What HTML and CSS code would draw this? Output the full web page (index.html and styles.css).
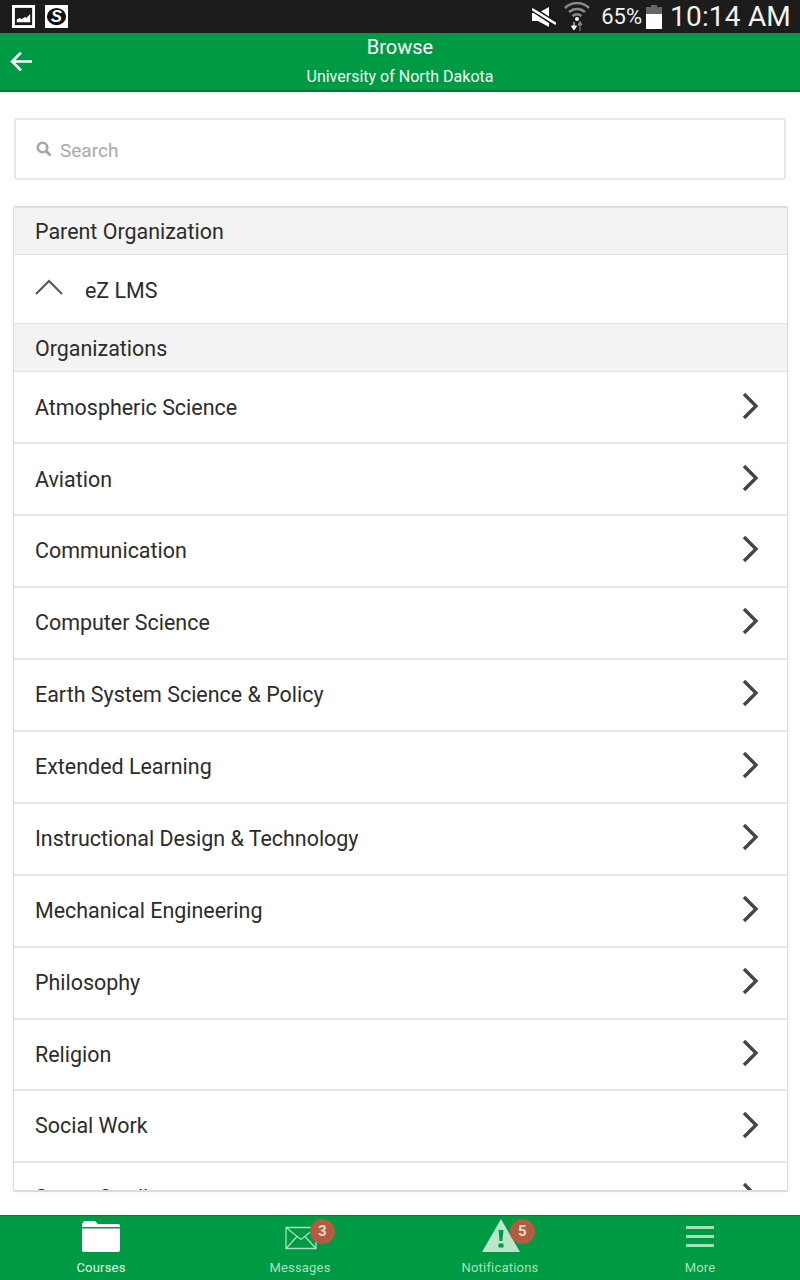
FILE: index.html
```html
<!DOCTYPE html>
<html lang="en">
<head>
<meta charset="utf-8">
<title>Browse</title>
<link rel="stylesheet" href="styles.css">
</head>
<body>
<div class="app">
  <div class="status">
    <div class="status-left">
      <svg class="sb-box" viewBox="0 0 24 24"><rect x="1.5" y="1.5" width="21" height="21" fill="#1c1c1c" stroke="#fff" stroke-width="3"/><path d="M5 18v-3l3-1.500 2 1 3.500-2 1.500 1 4-4v8.500z" fill="#fff"/></svg>
      <svg class="sb-box" viewBox="0 0 24 24"><rect width="24" height="24" fill="#fff"/><ellipse cx="12" cy="12" rx="10" ry="9" fill="#111"/><text x="12" y="17.500" text-anchor="middle" class="sb-s">S</text></svg>
    </div>
    <div class="status-right">
      <svg class="sb-mute" viewBox="0 0 24 20"><path d="M0 6h6l11-6v20L6 14H0z" fill="#fff"/><path d="M-1 1l26 17" stroke="#1c1c1c" stroke-width="5.500"/><path d="M0 2l24 15" stroke="#fff" stroke-width="2.400"/></svg>
      <svg class="sb-wifi" viewBox="0 0 26 30"><path d="M1 6a17 17 0 0 1 24 0M5 10a12 12 0 0 1 16 0M8.500 14a7 7 0 0 1 9 0" fill="none" stroke="#8a8a8a" stroke-width="2.500"/><circle cx="13" cy="17" r="2" fill="#fff"/><path d="M10 20v6M7.500 24l2.500 4 2.500-4z" fill="#fff" stroke="#fff" stroke-width="1"/><path d="M16 29v-7M14 23l2-3.500 2 3.500z" fill="#8a8a8a" stroke="#8a8a8a"/></svg>
      <span class="sb-pct">65%</span>
      <svg class="sb-batt" viewBox="0 0 16 24"><path d="M5 0h6v2H5z" fill="#666"/><path d="M0 2h16v7H0z" fill="#666"/><path d="M0 9h16v15H0z" fill="#fff"/></svg>
      <span class="sb-time">10:14 AM</span>
    </div>
  </div>
  <header class="topbar">
    <svg class="back" viewBox="0 0 24 24"><path d="M22 12H3M11.500 3.500L3 12l8.500 8.500" fill="none" stroke="#fff" stroke-width="2.600"/></svg>
    <div class="title">Browse</div>
    <div class="subtitle">University of North Dakota</div>
  </header>
  <main class="content">
    <div class="search">
      <svg class="search-icon" viewBox="0 0 16 16"><circle cx="6.500" cy="6.500" r="4.800" fill="none" stroke="#a8a8a8" stroke-width="2.600"/><path d="M10 10l4.500 4.500" stroke="#a8a8a8" stroke-width="3"/></svg>
      <span>Search</span>
    </div>
    <section class="card">
      <div class="section-head first">Parent Organization</div>
      <div class="parent-row">
        <svg class="up" viewBox="0 0 28 16"><path d="M1 15L14 2l13 13" fill="none" stroke="#555" stroke-width="2"/></svg>
        <span>eZ LMS</span>
      </div>
      <div class="section-head second">Organizations</div>
      <ul class="list">
        <li class="item"><span>Atmospheric Science</span><svg class="chev" viewBox="0 0 18 28"><path d="M2 2l12 12L2 26" fill="none" stroke="#444" stroke-width="3.400"/></svg></li>
        <li class="item"><span>Aviation</span><svg class="chev" viewBox="0 0 18 28"><path d="M2 2l12 12L2 26" fill="none" stroke="#444" stroke-width="3.400"/></svg></li>
        <li class="item"><span>Communication</span><svg class="chev" viewBox="0 0 18 28"><path d="M2 2l12 12L2 26" fill="none" stroke="#444" stroke-width="3.400"/></svg></li>
        <li class="item"><span>Computer Science</span><svg class="chev" viewBox="0 0 18 28"><path d="M2 2l12 12L2 26" fill="none" stroke="#444" stroke-width="3.400"/></svg></li>
        <li class="item"><span>Earth System Science &amp; Policy</span><svg class="chev" viewBox="0 0 18 28"><path d="M2 2l12 12L2 26" fill="none" stroke="#444" stroke-width="3.400"/></svg></li>
        <li class="item"><span>Extended Learning</span><svg class="chev" viewBox="0 0 18 28"><path d="M2 2l12 12L2 26" fill="none" stroke="#444" stroke-width="3.400"/></svg></li>
        <li class="item"><span>Instructional Design &amp; Technology</span><svg class="chev" viewBox="0 0 18 28"><path d="M2 2l12 12L2 26" fill="none" stroke="#444" stroke-width="3.400"/></svg></li>
        <li class="item"><span>Mechanical Engineering</span><svg class="chev" viewBox="0 0 18 28"><path d="M2 2l12 12L2 26" fill="none" stroke="#444" stroke-width="3.400"/></svg></li>
        <li class="item"><span>Philosophy</span><svg class="chev" viewBox="0 0 18 28"><path d="M2 2l12 12L2 26" fill="none" stroke="#444" stroke-width="3.400"/></svg></li>
        <li class="item"><span>Religion</span><svg class="chev" viewBox="0 0 18 28"><path d="M2 2l12 12L2 26" fill="none" stroke="#444" stroke-width="3.400"/></svg></li>
        <li class="item"><span>Social Work</span><svg class="chev" viewBox="0 0 18 28"><path d="M2 2l12 12L2 26" fill="none" stroke="#444" stroke-width="3.400"/></svg></li>
        <li class="item"><span>Space Studies</span><svg class="chev" viewBox="0 0 18 28"><path d="M2 2l12 12L2 26" fill="none" stroke="#444" stroke-width="3.400"/></svg></li>
      </ul>
    </section>
  </main>
  <nav class="tabs">
    <div class="tab active">
      <div class="tab-icon"><svg class="ic-folder" viewBox="0 0 38 33"><path d="M1 4a2 2 0 0 1 2-2h10l3 3h20a2 2 0 0 1 2 2v1H0V4z" fill="#fff"/><path d="M0 9.500h38V31a2 2 0 0 1-2 2H2a2 2 0 0 1-2-2z" fill="#fff"/></svg></div>
      <span>Courses</span>
    </div>
    <div class="tab">
      <div class="tab-icon"><svg class="ic-mail" viewBox="0 0 32 26"><path d="M1 3.500h30v21H1zM1 3.500l15 12 15-12M1 24.500l11-12M31 24.500l-11-12" fill="none" stroke="#a8e0bb" stroke-width="1.300"/></svg><b class="badge mail-badge">3</b></div>
      <span>Messages</span>
    </div>
    <div class="tab">
      <div class="tab-icon"><svg class="ic-warn" viewBox="0 0 38 33"><path d="M19 0l19 33H0z" fill="#bde5cb"/><path d="M16.500 11h5l-1 11h-3zM16.500 24.500h5v4h-5z" fill="#009a44"/></svg><b class="badge warn-badge">5</b></div>
      <span>Notifications</span>
    </div>
    <div class="tab">
      <div class="tab-icon"><div class="ic-menu"><i></i><i></i><i></i></div></div>
      <span>More</span>
    </div>
  </nav>
</div>
</body>
</html>
```

FILE: styles.css
```css
* { box-sizing: border-box; }
html, body { margin: 0; padding: 0; }
body { font-family: Roboto, "Liberation Sans", sans-serif; background: #fff; }
.app { width: 800px; height: 1280px; display: flex; flex-direction: column; overflow: hidden; }

.status { height: 33px; background: #1c1c1c; display: flex; justify-content: space-between; align-items: center; padding: 0 9px 0 12px; flex: none; }
.status-left { display: flex; gap: 10px; }
.sb-box { width: 23px; height: 23px; display: block; }
.sb-s { font: italic 700 17px "Liberation Sans", sans-serif; fill: #fff; }
.status-right { display: flex; align-items: center; color: #f2f2f2; }
.sb-mute { width: 24px; height: 20px; margin-right: 8px; }
.sb-wifi { width: 26px; height: 30px; margin-right: 11px; }
.sb-pct { font-size: 22px; margin-right: 4px; }
.sb-batt { width: 16px; height: 24px; margin-right: 8px; }
.sb-time { font-size: 28px; letter-spacing: 0.2px; }

.topbar { height: 59px; background: #009a44; border-bottom: 2px solid #067a3a; flex: none; position: relative; color: #fff; text-align: center; padding-top: 2px; }
.back { position: absolute; left: 9px; top: 16px; width: 25px; height: 25px; }
.title { font-size: 20px; line-height: 24px; }
.subtitle { font-size: 16px; line-height: 20px; margin-top: 8px; color: #f1f9f4; }

.content { flex: 1; min-height: 0; padding: 26px 12px 23px 13px; display: flex; flex-direction: column; background: #fff; }
.search { height: 62px; margin: 0 2px 26px 1px; padding: 2px 0 0 20px; flex: none; border: 2px solid #e8e8e8; border-radius: 3px; display: flex; align-items: center; color: #a9a9a9; font-size: 19px; }
.search-icon { width: 16px; height: 16px; margin-right: 8px; margin-top: -3px; }
.card { flex: 1; min-height: 0; overflow: hidden; border: 1px solid #dcdcdc; border-bottom-width: 2px; border-radius: 2px; background: #fff; box-shadow: 0 0 2px rgba(0, 0, 0, 0.1); }

.section-head { height: 48px; background: #f3f3f3; border-bottom: 1px solid #e2e2e2; font-size: 21.450px; color: #2c2c2c; padding-left: 21px; display: flex; align-items: center; }
.section-head.first { border-top: 1px solid #e2e2e2; }
.section-head.second { padding-top: 2px; }
.parent-row { height: 69px; display: flex; align-items: center; padding: 2px 0 0 21px; border-bottom: 1px solid #e2e2e2; font-size: 21.450px; color: #2c2c2c; }
.up { width: 28px; height: 16px; margin-right: 22px; margin-top: -6px; }

.list { list-style: none; margin: 0; padding: 0; }
.item { height: 72px; display: flex; align-items: center; justify-content: space-between; padding: 0 27px 0 21px; border-bottom: 2px solid #e6e6e6; font-size: 21.450px; color: #2c2c2c; }
.item:nth-child(n+3) { padding-bottom: 2px; }
.item:nth-child(10) { height: 71px; }
.item:nth-child(10), .item:nth-child(11) { padding-bottom: 1px; }
.chev { width: 18px; height: 28px; margin-top: -2px; }

.tabs { height: 65px; flex: none; background: #009a44; border-top: 1px solid #067a3a; display: grid; grid-template-columns: repeat(4, 1fr); }
.tab { display: flex; flex-direction: column; align-items: center; color: #a8e0bb; font-size: 13px; letter-spacing: 0.2px; }
.tab.active { color: #e2f5e9; }
.tab.active span { margin-left: 2px; }
.tab-icon { height: 44px; width: 40px; margin-left: 2px; position: relative; display: flex; justify-content: center; padding-top: 3px; }
.tab:last-child .tab-icon { margin-left: 0; }
.tab span { line-height: 16px; }
.ic-folder { width: 38px; height: 33px; }
.ic-mail { width: 32px; height: 26px; margin-top: 5px; }
.ic-warn { width: 38px; height: 33px; }
.ic-menu { width: 28px; margin-top: 7px; display: flex; flex-direction: column; gap: 6px; }
.ic-menu i { display: block; height: 3px; background: #a8e0bb; }
.badge { position: absolute; width: 25px; height: 25px; border-radius: 50%; background: #b25c42; color: #e8dcc8; font: 700 15px/25px Roboto, sans-serif; text-align: center; }
.mail-badge { left: 29px; top: 3px; }
.warn-badge { left: 29px; top: 3px; }
```
